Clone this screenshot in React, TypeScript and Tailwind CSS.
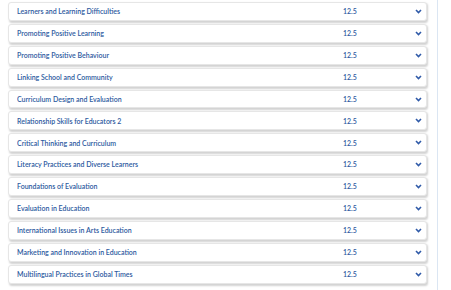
import React from "react";

const rows = [
  "Learners and Learning Difficulties",
  "Promoting Positive Learning",
  "Promoting Positive Behaviour",
  "Linking School and Community",
  "Curriculum Design and Evaluation",
  "Relationship Skills for Educators 2",
  "Critical Thinking and Curriculum",
  "Literacy Practices and Diverse Learners",
  "Foundations of Evaluation",
  "Evaluation in Education",
  "International Issues in Arts Education",
  "Marketing and Innovation in Education",
  "Multilingual Practices in Global Times",
];

function Chevron() {
  return (
    <svg width="7" height="5" viewBox="0 0 7 5" className="block">
      <path d="M1 1 L3.5 3.5 L6 1" fill="none" stroke="#2f5aa8" strokeWidth="1.6" />
    </svg>
  );
}

export default function App() {
  return (
    <div
      className="w-[451px] h-[290px] bg-white overflow-hidden flex"
      style={{ fontFamily: "Lato, 'Open Sans', sans-serif" }}
    >
      <div className="w-[437px] pl-[8px] pr-[10px] pt-[2px] flex flex-col gap-[3px]">
        {rows.map((r) => (
          <div
            key={r}
            className="h-[18.9px] bg-white rounded-[3px] border border-[#e6e6e6] shadow-[1px_1.5px_2px_rgba(0,0,0,0.18)] flex items-center pl-[8px] pr-[4px] text-[#2d5aa0] text-[7px] font-semibold"
          >
            <span className="w-[326px] truncate">{r}</span>
            <span className="flex-1">12.5</span>
            <Chevron />
          </div>
        ))}
      </div>
      <div className="w-px h-full bg-[#dbe6f3]" />
    </div>
  );
}
